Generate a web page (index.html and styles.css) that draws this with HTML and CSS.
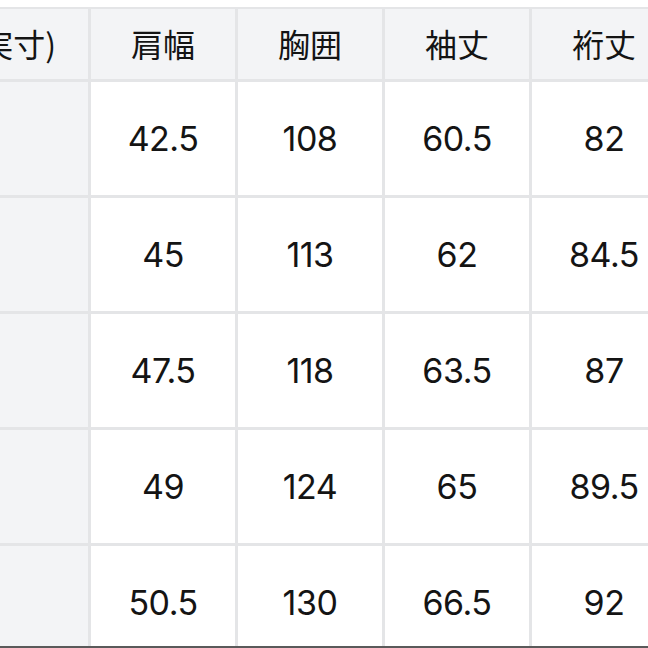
FILE: index.html
```html
<!DOCTYPE html>
<html lang="ja">
<head>
<meta charset="utf-8">
<link rel="stylesheet" href="styles.css">
</head>
<body>
<div class="page">
  <div class="table">
    <div class="cell head first"><span class="label">サイズ(実寸)</span></div>
    <div class="cell head">肩幅</div>
    <div class="cell head">胸囲</div>
    <div class="cell head">袖丈</div>
    <div class="cell head">裄丈</div>

    <div class="cell first"></div>
    <div class="cell">42.5</div>
    <div class="cell">108</div>
    <div class="cell">60.5</div>
    <div class="cell">82</div>

    <div class="cell first"></div>
    <div class="cell">45</div>
    <div class="cell">113</div>
    <div class="cell">62</div>
    <div class="cell">84.5</div>

    <div class="cell first"></div>
    <div class="cell">47.5</div>
    <div class="cell">118</div>
    <div class="cell">63.5</div>
    <div class="cell">87</div>

    <div class="cell first"></div>
    <div class="cell">49</div>
    <div class="cell">124</div>
    <div class="cell">65</div>
    <div class="cell">89.5</div>

    <div class="cell first"></div>
    <div class="cell">50.5</div>
    <div class="cell">130</div>
    <div class="cell">66.5</div>
    <div class="cell">92</div>
  </div>
  <div class="edge"></div>
</div>
</body>
</html>
```

FILE: styles.css
```css
html, body {
  margin: 0;
  padding: 0;
  background: #ffffff;
}
.page {
  width: 648px;
  height: 648px;
  overflow: hidden;
  position: relative;
  background: #ffffff;
}
.table {
  display: grid;
  grid-template-columns: 286px 144px 144px 144px 144px;
  grid-template-rows: 70px 113px 113px 113px 113px 113px;
  gap: 3px;
  background: #e4e5e7;
  padding-top: 2px;
  margin-top: 7px;
  margin-left: -198px;
  width: max-content;
}
.cell {
  background: #ffffff;
  display: flex;
  align-items: center;
  justify-content: center;
  font-family: Inter, "Noto Sans CJK JP", sans-serif;
  font-size: 34px;
  color: #141414;
  letter-spacing: -0.5px;
}
.cell.head {
  background: #f3f4f6;
  font-family: "Noto Sans CJK JP", sans-serif;
  font-size: 32px;
  letter-spacing: 0;
  padding-bottom: 3px;
}
.cell.first {
  background: #f3f4f6;
}
.cell.head.first {
  justify-content: flex-end;
  padding-right: 32px;
}
.label {
  white-space: nowrap;
}
.edge {
  position: absolute;
  left: 0;
  bottom: 0;
  width: 648px;
  height: 2px;
  background: #5a5a5a;
}
```
